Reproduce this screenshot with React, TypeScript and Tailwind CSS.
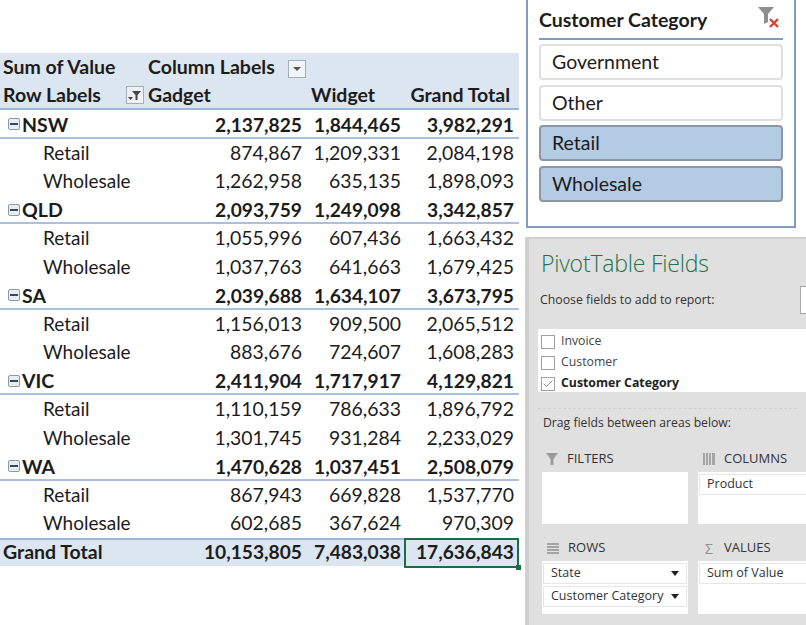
import { Check } from 'lucide-react';

const states = [
  { name: 'NSW', total: ['2,137,825', '1,844,465', '3,982,291'], retail: ['874,867', '1,209,331', '2,084,198'], wholesale: ['1,262,958', '635,135', '1,898,093'] },
  { name: 'QLD', total: ['2,093,759', '1,249,098', '3,342,857'], retail: ['1,055,996', '607,436', '1,663,432'], wholesale: ['1,037,763', '641,663', '1,679,425'] },
  { name: 'SA', total: ['2,039,688', '1,634,107', '3,673,795'], retail: ['1,156,013', '909,500', '2,065,512'], wholesale: ['883,676', '724,607', '1,608,283'] },
  { name: 'VIC', total: ['2,411,904', '1,717,917', '4,129,821'], retail: ['1,110,159', '786,633', '1,896,792'], wholesale: ['1,301,745', '931,284', '2,233,029'] },
  { name: 'WA', total: ['1,470,628', '1,037,451', '2,508,079'], retail: ['867,943', '669,828', '1,537,770'], wholesale: ['602,685', '367,624', '970,309'] },
];

function Nums({ values, bold }: { values: string[]; bold?: boolean }) {
  return (
    <div className={`flex ${bold ? 'text-[19.2px] font-bold' : 'text-[19.4px]'}`}>
      <div className="w-[157px] pr-[3px] text-right">{values[0]}</div>
      <div className="w-[100px] pr-[4px] text-right">{values[1]}</div>
      <div className="w-[114px] pr-[5px] text-right">{values[2]}</div>
    </div>
  );
}

function Minus() {
  return (
    <span className="ml-[8px] mr-[2px] flex h-[12px] w-[12px] items-center justify-center rounded-[2px] border border-[#8d99a6] bg-[#e8edf2]">
      <span className="h-[2px] w-[8px] bg-[#3a4754]" />
    </span>
  );
}

function StateRows({ s }: { s: (typeof states)[number] }) {
  return (
    <>
      <div className="flex h-[28.5px] items-center border-b-2 border-[#a9c1dc] pt-[2px]">
        <div className="flex w-[148px] items-center text-[19.5px] font-bold"><Minus />{s.name}</div>
        <Nums values={s.total} bold />
      </div>
      <div className="flex h-[28.5px] items-center pb-[1px]">
        <div className="w-[148px] pl-[43px]">Retail</div>
        <Nums values={s.retail} />
      </div>
      <div className="flex h-[28.5px] items-center pb-[1px]">
        <div className="w-[148px] pl-[43px]">Wholesale</div>
        <Nums values={s.wholesale} />
      </div>
    </>
  );
}

function PivotTable() {
  return (
    <div className="w-[519px] shrink-0 pt-[53px] font-['Lato','Liberation_Sans',sans-serif] text-[19px] leading-none text-[#1c1c1c]">
      <div className="bg-[#dce6f1] text-[19.5px] font-bold">
        <div className="flex h-[28.5px] items-center pb-[2px]">
          <div className="w-[148px] pl-[3px]">Sum of Value</div>
          <div>Column Labels</div>
          <span className="ml-[13px] mt-[5px] flex h-[18px] w-[18px] items-center justify-center border border-[#a5adb8] bg-[#f1f4f8]">
            <span className="h-0 w-0 border-x-[4px] border-t-[4px] border-x-transparent border-t-[#555]" />
          </span>
        </div>
        <div className="flex h-[28.5px] items-center border-b-2 border-[#9db7d3]">
          <div className="flex w-[148px] items-center justify-between pl-[3px]">
            Row Labels
            <span className="mr-[4px] flex h-[18px] w-[18px] items-center justify-center border border-[#a5adb8] bg-[#eef2f6]">
              <svg width="14" height="12" viewBox="0 0 14 12"><path d="M4 2h9L9.5 6v5h-2V6z" fill="#444" /><path d="M0 8h5L2.5 11z" fill="#444" /></svg>
            </span>
          </div>
          <div className="w-[157px]">Gadget</div>
          <div className="w-[100px] pl-[6px]">Widget</div>
          <div className="w-[114px] pr-[9px] text-right">Grand Total</div>
        </div>
      </div>
      {states.map(s => <StateRows key={s.name} s={s} />)}
      <div className="relative flex h-[28.5px] items-center border-t-2 border-[#9db7d3] bg-[#dce6f1] pb-[2px]">
        <div className="w-[148px] pl-[3px] text-[19.5px] font-bold">Grand Total</div>
        <Nums values={['10,153,805', '7,483,038', '17,636,843']} bold />
        <div className="absolute bottom-[-2px] right-0 top-[-2px] w-[115px] border-2 border-[#1f6b45]" />
        <div className="absolute bottom-[-4px] right-[-2px] h-[5px] w-[5px] bg-[#1f6b45]" />
      </div>
    </div>
  );
}

function Slicer() {
  const items = [
    { label: 'Government', on: false },
    { label: 'Other', on: false },
    { label: 'Retail', on: true },
    { label: 'Wholesale', on: true },
  ];
  return (
    <div className="ml-[1px] h-[228px] w-[270px] border-2 border-t-0 border-[#7f9dc0] bg-white px-[11px] font-['Lato','Liberation_Sans',sans-serif]">
      <div className="flex h-[40px] items-center justify-between border-b-2 border-[#7f9dc0] pt-[2px]">
        <span className="text-[19.5px] font-bold text-[#1c1c1c]">Customer Category</span>
        <svg width="24" height="24" viewBox="0 0 24 24" className="mr-[2px] mt-[-6px]">
          <path d="M1 2h16l-6 7v8l-4 2V9z" fill="#8f8f8f" />
          <path d="M13 14l8 8M21 14l-8 8" stroke="#d8452e" strokeWidth="2.4" />
        </svg>
      </div>
      <div className="mt-[4px] flex flex-col gap-[4.5px]">
        {items.map(i => (
          <div key={i.label} className={`flex h-[36px] items-center rounded-[4px] border-2 pl-[11px] text-[19.5px] text-[#1c1c1c] ${i.on ? 'border-[#8b97a6] bg-[#b4cbe4]' : 'border-[#e0e0e0] bg-white'}`}>
            {i.label}
          </div>
        ))}
      </div>
    </div>
  );
}

function AreaField({ label, arrow }: { label: string; arrow?: boolean }) {
  return (
    <div className="flex h-[21px] items-center justify-between whitespace-nowrap border border-[#e6e6e6] bg-white px-[7px] text-[12.5px] text-[#333]">
      {label}
      {arrow && <span className="h-0 w-0 border-x-[4px] border-t-[5px] border-x-transparent border-t-[#222]" />}
    </div>
  );
}

function FieldRow({ label, checked, bold }: { label: string; checked?: boolean; bold?: boolean }) {
  return (
    <div className="flex h-[21px] items-center">
      <span className="ml-[3px] mr-[6px] flex h-[14px] w-[14px] items-center justify-center border border-[#a0a0a0] bg-white">
        {checked && <Check size={12} strokeWidth={1.5} className="text-[#666]" />}
      </span>
      <span className={bold ? 'font-bold text-[#222]' : 'text-[#444]'}>{label}</span>
    </div>
  );
}

function FieldsPane() {
  return (
    <div className="mt-[9px] h-[388px] w-[281px] overflow-hidden border-l-4 border-t-2 border-[#cfcfcf] bg-[#e0e0e0] font-['Open_Sans','Liberation_Sans',sans-serif]">
      <div className="pl-[12px] pt-[9px] text-[23px] font-light leading-[30px] tracking-[-0.2px] text-[#217346]">PivotTable Fields</div>
      <div className="mt-[8px] flex h-[28px] items-center justify-between">
        <span className="pl-[11px] text-[12.3px] text-[#333]">Choose fields to add to report:</span>
        <span className="mr-[-1px] h-[28px] w-[7px] border border-[#a8a8a8] bg-white" />
      </div>
      <div className="ml-[9px] mt-[15px] h-[63px] bg-white pt-[2px] text-[12.3px]">
        <FieldRow label="Invoice" />
        <FieldRow label="Customer" />
        <FieldRow label="Customer Category" checked bold />
      </div>
      <div className="mx-[9px] mt-[16px] border-t border-dashed border-[#d0d0d0]" />
      <div className="pl-[14px] pt-[5px] text-[12.2px] leading-[18px] text-[#333]">Drag fields between areas below:</div>
      <div className="ml-[13px] mt-[17px] grid grid-cols-[146px_146px] gap-x-[10px] gap-y-[14px] text-[13px] text-[#333]">
        <div>
          <div className="mb-[3px] flex h-[20px] items-center gap-[9px] pl-[4px]">
            <svg width="12" height="12" viewBox="0 0 12 12"><path d="M0 0h12L7.5 6v6h-3V6z" fill="#9b9b9b" /></svg>FILTERS
          </div>
          <div className="h-[52px] bg-white" />
        </div>
        <div>
          <div className="mb-[3px] flex h-[20px] items-center gap-[9px] pl-[5px]">
            <svg width="12" height="12" viewBox="0 0 12 12"><path d="M0 0h2v12H0zM3 0h2v12H3zM6 0h2v12H6zM9 0h3v12H9z" fill="#a5a5a5" /></svg>COLUMNS
          </div>
          <div className="h-[52px] bg-white p-[1px] pr-0 pt-[2px]"><AreaField label="Product" /></div>
        </div>
        <div>
          <div className="mb-[3px] flex h-[20px] items-center gap-[9px] pl-[5px]">
            <svg width="12" height="12" viewBox="0 0 12 12"><path d="M0 1h12v2H0zM0 4h12v2H0zM0 7h12v2H0zM0 10h12v2H0z" fill="#a5a5a5" /></svg>ROWS
          </div>
          <div className="flex h-[53px] flex-col gap-[2px] bg-white p-[1px] pt-[2px]">
            <AreaField label="State" arrow />
            <AreaField label="Customer Category" arrow />
          </div>
        </div>
        <div>
          <div className="mb-[3px] flex h-[20px] items-center gap-[9px] pl-[5px]">
            <span className="w-[12px] text-center text-[14px] text-[#8f8f8f]">Σ</span>VALUES
          </div>
          <div className="h-[53px] bg-white p-[1px] pr-0 pt-[2px]"><AreaField label="Sum of Value" /></div>
        </div>
      </div>
    </div>
  );
}

export default function App() {
  return (
    <div className="flex h-[625px] w-[806px] overflow-hidden bg-white">
      <PivotTable />
      <div className="ml-[6px] flex w-[281px] shrink-0 flex-col">
        <Slicer />
        <FieldsPane />
      </div>
    </div>
  );
}
